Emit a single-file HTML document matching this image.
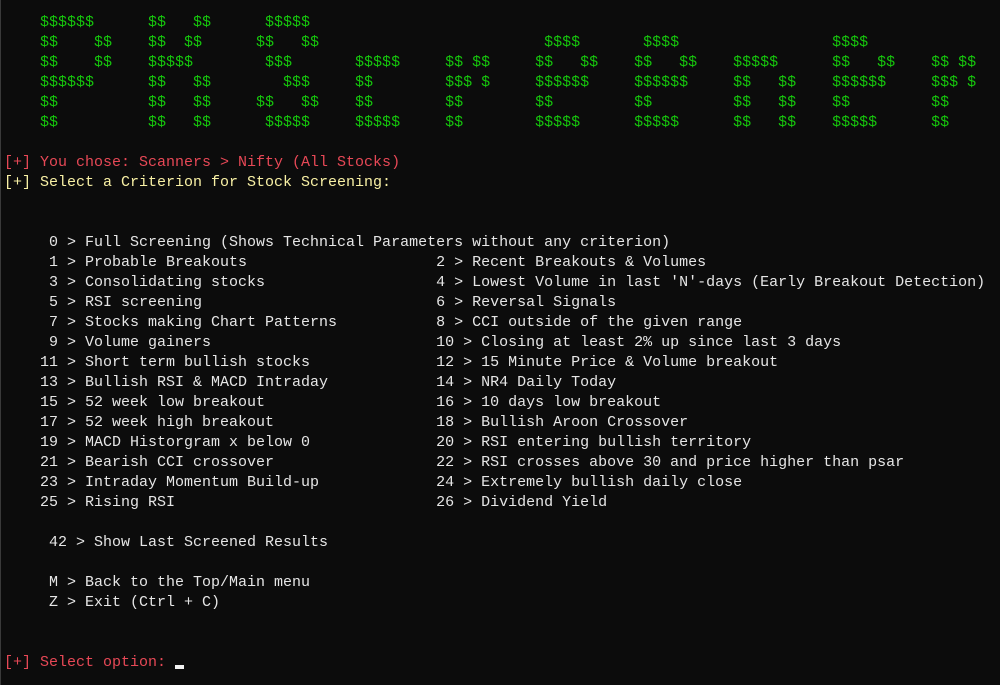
<!DOCTYPE html>
<html><head><meta charset="utf-8">
<style>
html,body{margin:0;padding:0;background:#0c0c0c;width:1000px;height:685px;overflow:hidden}
pre{margin:0;position:absolute;left:4px;top:13px;font-family:"Liberation Mono",monospace;font-size:15px;line-height:20px;color:#e6e6e6;white-space:pre}
.g{color:#16c60c}.r{color:#e74856}.y{color:#f9f1a5}
.cur{display:inline-block;width:9px;height:4px;background:#f2f2f2;vertical-align:-3px}
body::before{content:"";position:absolute;left:0;top:0;bottom:0;width:1px;background:#3a3a3a}
</style></head><body>
<pre><span class="g">    $$$$$$      $$   $$      $$$$$
    $$    $$    $$  $$      $$   $$                         $$$$       $$$$                 $$$$
    $$    $$    $$$$$        $$$       $$$$$     $$ $$     $$   $$    $$   $$    $$$$$      $$   $$    $$ $$
    $$$$$$      $$   $$        $$$     $$        $$$ $     $$$$$$     $$$$$$     $$   $$    $$$$$$     $$$ $
    $$          $$   $$     $$   $$    $$        $$        $$         $$         $$   $$    $$         $$
    $$          $$   $$      $$$$$     $$$$$     $$        $$$$$      $$$$$      $$   $$    $$$$$      $$</span>

<span class="r">[+] You chose: Scanners &gt; Nifty (All Stocks)</span>
<span class="y">[+] Select a Criterion for Stock Screening:</span>


     0 &gt; Full Screening (Shows Technical Parameters without any criterion)
     1 &gt; Probable Breakouts                     2 &gt; Recent Breakouts &amp; Volumes
     3 &gt; Consolidating stocks                   4 &gt; Lowest Volume in last 'N'-days (Early Breakout Detection)
     5 &gt; RSI screening                          6 &gt; Reversal Signals
     7 &gt; Stocks making Chart Patterns           8 &gt; CCI outside of the given range
     9 &gt; Volume gainers                         10 &gt; Closing at least 2% up since last 3 days
    11 &gt; Short term bullish stocks              12 &gt; 15 Minute Price &amp; Volume breakout
    13 &gt; Bullish RSI &amp; MACD Intraday            14 &gt; NR4 Daily Today
    15 &gt; 52 week low breakout                   16 &gt; 10 days low breakout
    17 &gt; 52 week high breakout                  18 &gt; Bullish Aroon Crossover
    19 &gt; MACD Historgram x below 0              20 &gt; RSI entering bullish territory
    21 &gt; Bearish CCI crossover                  22 &gt; RSI crosses above 30 and price higher than psar
    23 &gt; Intraday Momentum Build-up             24 &gt; Extremely bullish daily close
    25 &gt; Rising RSI                             26 &gt; Dividend Yield

     42 &gt; Show Last Screened Results

     M &gt; Back to the Top/Main menu
     Z &gt; Exit (Ctrl + C)


<span class="r">[+] Select option: </span><span class="cur"></span></pre>
</body></html>
